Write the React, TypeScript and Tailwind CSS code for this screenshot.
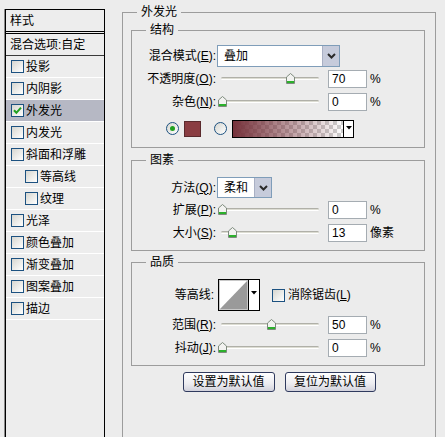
import React from "react";

function Check({ checked }: { checked?: boolean }) {
  return (
    <span className="flex h-[13px] w-[13px] shrink-0 items-center justify-center border border-[#1c5180] bg-[linear-gradient(135deg,#d6d6d0,#ffffff)]">
      {checked && (
        <svg width="9" height="9" viewBox="0 0 9 9">
          <path d="M1 4.2 L3.4 6.8 L8 1.6" stroke="#21a121" strokeWidth="2" fill="none" />
        </svg>
      )}
    </span>
  );
}

function Radio({ on }: { on?: boolean }) {
  return (
    <span className="flex h-[13px] w-[13px] shrink-0 items-center justify-center rounded-full border border-[#1c5180] bg-[linear-gradient(135deg,#d6d6d0,#ffffff)]">
      {on && <span className="h-[5px] w-[5px] rounded-full bg-[#21a121]" />}
    </span>
  );
}

function Lbl({ t, k }: { t: string; k?: string }) {
  return (
    <div className="w-[85px] shrink-0 whitespace-nowrap pr-[1px] text-right">
      {t}
      {k ? (
        <>
          (<span className="underline underline-offset-1">{k}</span>)
        </>
      ) : null}
      :
    </div>
  );
}

function Arrow() {
  return (
    <div className="flex w-[17px] shrink-0 items-center justify-center border-l border-[#a9b0c4] bg-[#c6cbdb]">
      <svg width="9" height="6" viewBox="0 0 9 6">
        <path d="M1 1 L4.5 4.5 L8 1" stroke="#2a2a2a" strokeWidth="2" fill="none" />
      </svg>
    </div>
  );
}

function Slider({ pos }: { pos: number }) {
  return (
    <div className="relative h-full w-[111px] shrink-0">
      <div className="absolute left-[4px] top-[10px] h-[3px] w-[98px] rounded-full border-t border-[#b0b0a8] border-b border-b-white bg-[#dcdcd2]" />
      <svg className="absolute top-[6px]" style={{ left: pos - 4 }} width="9" height="11" viewBox="0 0 9 11">
        <path d="M0.5 10.5 V4 L4.5 0.5 L8.5 4 V10.5 Z" fill="#f2f2f0" stroke="#7d8a7d" />
        <rect x="1" y="8" width="7" height="2" fill="#2bb02b" />
      </svg>
    </div>
  );
}

function Input({ v }: { v: string }) {
  return (
    <div className="ml-[0px] flex h-[18px] w-[39px] shrink-0 items-center border border-[#a5acb2] bg-white pl-[3px] leading-none">
      {v}
    </div>
  );
}

function SliderRow({ t, k, pos, v, unit }: { t: string; k: string; pos: number; v: string; unit: string }) {
  return (
    <div className="flex h-[23px] items-center">
      <Lbl t={t} k={k} />
      <Slider pos={pos} />
      <Input v={v} />
      <span className="ml-[3px]">{unit}</span>
    </div>
  );
}

const leftItems: { t: string; checked?: boolean; hl?: boolean; indent?: boolean }[] = [
  { t: "投影" },
  { t: "内阴影" },
  { t: "外发光", checked: true, hl: true },
  { t: "内发光" },
  { t: "斜面和浮雕" },
  { t: "等高线", indent: true },
  { t: "纹理", indent: true },
  { t: "光泽" },
  { t: "颜色叠加" },
  { t: "渐变叠加" },
  { t: "图案叠加" },
  { t: "描边" },
];

export default function App() {
  return (
    <div className="flex h-[437px] w-[445px] items-start overflow-hidden bg-[#ececec] font-['Liberation_Sans','Noto_Sans_CJK_SC',sans-serif] text-[12px] leading-none text-black">
      {/* left panel */}
      <div className="ml-[5px] mt-[9px] h-[440px] w-[100px] shrink-0 border border-black bg-[#ededed] shadow-[-1px_0_0_#8a8a8a]">
        <div className="flex h-[24px] items-center border-b-[3px] border-double border-black pl-[4px]">样式</div>
        <div className="flex h-[22px] items-center border-b border-[#3a3a3a] pl-[4px]">混合选项:自定</div>
        {leftItems.map((it) => (
          <div
            key={it.t}
            className={
              "flex h-[22px] items-center gap-[2px] border-b border-white " +
              (it.indent ? "pl-[19px] " : "pl-[5px] ") +
              (it.hl ? "bg-[#b6b8c4]" : "")
            }
          >
            <Check checked={it.checked} />
            <span>{it.t}</span>
          </div>
        ))}
      </div>

      {/* main */}
      <fieldset className="ml-[17px] mt-[4px] h-[460px] w-[314px] shrink-0 border border-[#9c9c9c]">
        <legend className="ml-[14px] px-[4px] leading-[16px]">外发光</legend>

        {/* 结构 */}
        <fieldset className="ml-[8px] mt-[2px] w-[294px] border border-[#9c9c9c] pb-[10px]">
          <legend className="ml-[14px] px-[4px] leading-[16px]">结构</legend>
          <div className="mt-[7px] flex h-[22px] items-center">
            <Lbl t="混合模式" k="E" />
            <div className="flex h-[22px] w-[123px] border border-[#7f9db9] bg-white">
              <div className="flex flex-1 items-center pl-[6px]">叠加</div>
              <Arrow />
            </div>
          </div>
          <SliderRow t="不透明度" k="O" pos={73} v="70" unit="%" />
          <SliderRow t="杂色" k="N" pos={5} v="0" unit="%" />
          <div className="mt-[7px] flex h-[17px] items-center pl-[34px]">
            <Radio on />
            <div className="ml-[5px] h-[16px] w-[17px] border border-[#5a2a2d] bg-[#8a3d42]" />
            <div className="ml-[13px]">
              <Radio />
            </div>
            <div className="ml-[5px] flex h-[18px] w-[122px] border border-black">
              <div className="flex-1 bg-[image:repeating-conic-gradient(#cfcfcf_0_25%,#ffffff_0_50%)] bg-[length:8px_8px]">
                <div className="h-full w-full bg-[linear-gradient(to_right,#76323b,rgba(118,50,59,0.55)_45%,rgba(118,50,59,0))]" />
              </div>
              <div className="flex w-[10px] items-start justify-center border-l border-black bg-white pt-[5px]">
                <svg width="6" height="4" viewBox="0 0 6 4">
                  <path d="M0 0 H6 L3 3.5 Z" fill="#000" />
                </svg>
              </div>
            </div>
          </div>
        </fieldset>

        {/* 图素 */}
        <fieldset className="ml-[8px] mt-[4px] w-[294px] border border-[#9c9c9c] pb-[6px]">
          <legend className="ml-[14px] px-[4px] leading-[16px]">图素</legend>
          <div className="mt-[9px] flex h-[21px] items-center">
            <Lbl t="方法" k="Q" />
            <div className="flex h-[21px] w-[55px] border border-[#7f9db9] bg-white">
              <div className="flex flex-1 items-center pl-[6px]">柔和</div>
              <Arrow />
            </div>
          </div>
          <SliderRow t="扩展" k="P" pos={5} v="0" unit="%" />
          <SliderRow t="大小" k="S" pos={15} v="13" unit="像素" />
        </fieldset>

        {/* 品质 */}
        <fieldset className="ml-[8px] mt-[3px] w-[294px] border border-[#9c9c9c] pb-[6px]">
          <legend className="ml-[14px] px-[4px] leading-[16px]">品质</legend>
          <div className="mt-[9px] flex h-[32px] items-center">
            <div className="w-[85px] shrink-0 pr-[3px] text-right">等高线:</div>
            <div className="ml-[1px] flex h-[32px] w-[42px] border border-black bg-white">
              <div className="relative w-[29px] border border-[#c8c8c8]">
                <svg width="27" height="28" viewBox="0 0 27 28" className="block">
                  <path d="M0 28 L27 0 V28 Z" fill="#9a9a9a" />
                </svg>
              </div>
              <div className="flex flex-1 items-start justify-center border-l border-black pt-[11px]">
                <svg width="6" height="4" viewBox="0 0 6 4">
                  <path d="M0 0 H6 L3 3.5 Z" fill="#000" />
                </svg>
              </div>
            </div>
            <div className="ml-[12px]">
              <Check />
            </div>
            <span className="ml-[3px]">
              消除锯齿(<span className="underline underline-offset-1">L</span>)
            </span>
          </div>
          <div className="mt-[2px]">
            <SliderRow t="范围" k="R" pos={54} v="50" unit="%" />
          </div>
          <SliderRow t="抖动" k="J" pos={5} v="0" unit="%" />
        </fieldset>

        <div className="mt-[6px] flex justify-center gap-[10px]">
          <button className="flex h-[20px] w-[92px] items-center justify-center rounded-[3px] border border-[#2f3a5e] bg-[linear-gradient(to_bottom,#ffffff,#ececf0_60%,#d2d2dc)] text-[12px]">
            设置为默认值
          </button>
          <button className="flex h-[20px] w-[91px] items-center justify-center rounded-[3px] border border-[#2f3a5e] bg-[linear-gradient(to_bottom,#ffffff,#ececf0_60%,#d2d2dc)] text-[12px]">
            复位为默认值
          </button>
        </div>
      </fieldset>
    </div>
  );
}
